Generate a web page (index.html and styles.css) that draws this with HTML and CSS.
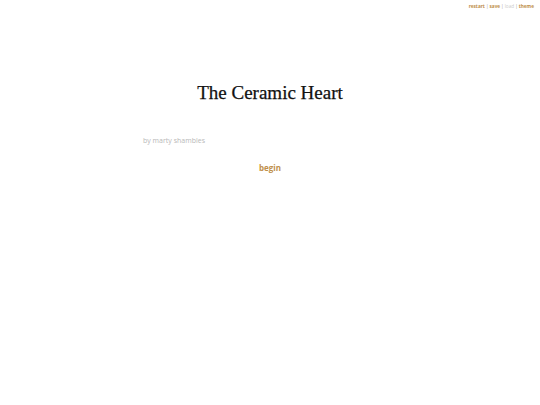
FILE: index.html
```html
<!DOCTYPE html>
<html>
<head>
<meta charset="utf-8">
<link rel="stylesheet" href="styles.css">
</head>
<body>
<div class="menu">
  <a class="link">restart</a><span class="sep">|</span><a class="link">save</a><span class="sep">|</span><span class="disabled">load</span><span class="sep">|</span><a class="link">theme</a>
</div>
<main class="story">
  <h1 class="title">The Ceramic Heart</h1>
  <p class="byline">by marty shambles</p>
  <p class="begin"><a class="link">begin</a></p>
</main>
</body>
</html>
```
FILE: styles.css
```css
html, body { margin: 0; padding: 0; background: #fff; }
body { width: 540px; height: 405px; font-family: "Open Sans", sans-serif; }
.menu {
  display: flex;
  justify-content: flex-end;
  gap: 1px;
  padding: 3px 6px 0 0;
  font-size: 4.7px;
  line-height: 6px;
  font-weight: bold;
}
.menu .link { color: #c0904a; }
.menu .sep { color: #999; font-weight: normal; }
.menu .disabled { color: #ccc; font-weight: normal; }
.story { width: 254px; margin: 0 auto; padding-top: 67px; }
.title {
  margin: 0;
  text-align: center;
  font-family: "Liberation Serif", serif;
  font-weight: normal;
  font-size: 19px;
  line-height: 34px;
  color: #111;
  -webkit-text-stroke: 0.25px #111;
}
.byline {
  margin: 26px 0 0 0;
  font-size: 7px;
  line-height: 10px;
  color: #b8b8b8;
}
.begin {
  margin: 17px 0 0 0;
  text-align: center;
  font-size: 8px;
  line-height: 10px;
  font-weight: bold;
}
.begin .link { color: #c0904a; }
```
